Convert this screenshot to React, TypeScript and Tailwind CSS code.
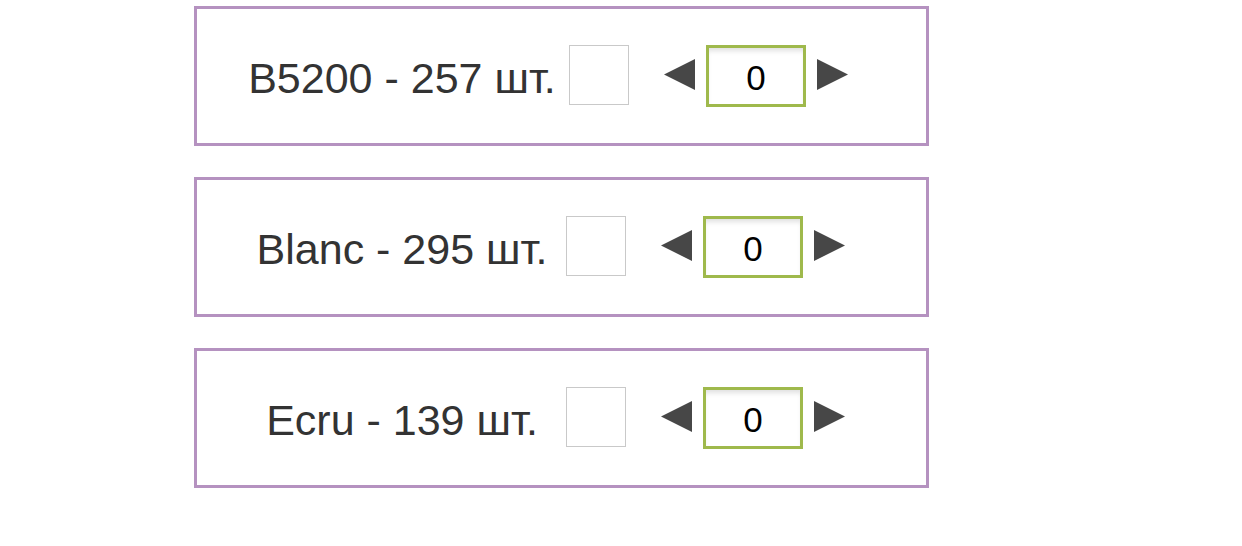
const rows = [
  { label: "B5200 - 257 шт.", shift: "ml-[10px]" },
  { label: "Blanc - 295 шт.", shift: "ml-[7px]" },
  { label: "Ecru - 139 шт.", shift: "ml-[7px]" },
];

function Arrow({ dir }: { dir: "left" | "right" }) {
  return (
    <svg width="31" height="31" viewBox="0 0 31 31" className="shrink-0">
      {dir === "left" ? (
        <polygon points="0,15.5 31,0 31,31" fill="#474747" />
      ) : (
        <polygon points="31,15.5 0,0 0,31" fill="#474747" />
      )}
    </svg>
  );
}

function Row({ label, shift }: { label: string; shift: string }) {
  return (
    <div className="flex h-[140px] w-[735px] items-center border-[3px] border-[#b592c0] bg-white">
      <div className="ml-[48px] w-[314px] shrink-0 whitespace-nowrap pt-[5px] text-center text-[43px] leading-none text-[#333333]">
        {label}
      </div>
      <div className={`${shift} -mt-[3px] h-[60px] w-[60px] shrink-0 border border-[#c9c9c9] bg-white`} />
      <div className="ml-[35px] -mt-[4px] flex">
        <Arrow dir="left" />
      </div>
      <div className="ml-[11px] flex h-[62px] w-[100px] shrink-0 items-center justify-center border-[3px] border-[#9fb94c] bg-white pt-[2px] text-[35px] leading-none text-black shadow-[inset_0_5px_5px_-2px_rgba(0,0,0,0.12)]">
        0
      </div>
      <div className="ml-[11px] -mt-[4px] flex">
        <Arrow dir="right" />
      </div>
    </div>
  );
}

export default function App() {
  return (
    <div
      className="flex h-[546px] w-[1242px] flex-col gap-[31px] bg-white pl-[194px] pt-[6px]"
      style={{ fontFamily: '"Liberation Sans", Arial, sans-serif' }}
    >
      {rows.map((r) => (
        <Row key={r.label} label={r.label} shift={r.shift} />
      ))}
    </div>
  );
}
